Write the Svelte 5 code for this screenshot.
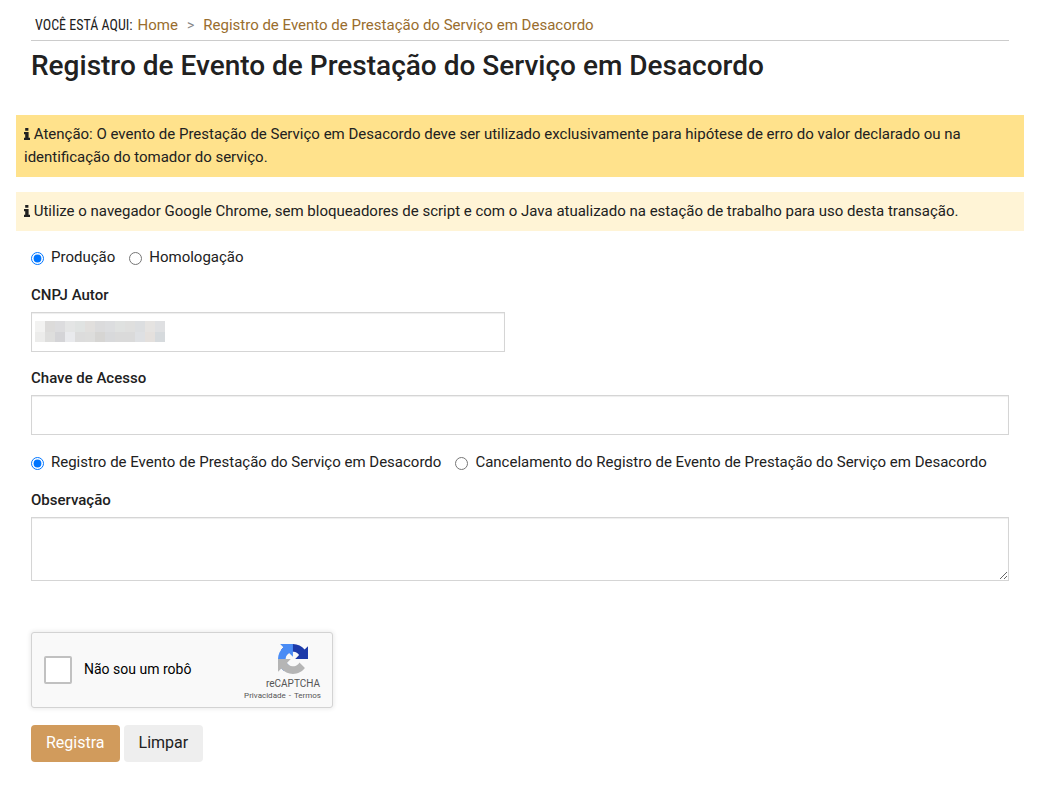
<script>
  let ambiente = $state('producao');
  let tipo = $state('registro');
  let cnpj = $state('');
  let chave = $state('');
  let observacao = $state('');
  let humano = $state(false);

  const mosaic = [
    ['#f2f2f1', '#dcdbda', '#dcdcde', '#e4e5e5', '#e0e3e2', '#e1dfdd', '#dbdbdc', '#dcdddf', '#dfe1e0', '#dfdfde', '#dcdee0', '#e5e3e1', '#dfe0e2'],
    ['#ececeb', '#dededd', '#d4d4d7', '#e9eaed', '#dcdcdc', '#dddddc', '#d6d5d3', '#d8d9db', '#dadada', '#dadada', '#dee0e3', '#e4e0dd', '#d6dadd'],
  ];

  function limpar() {
    cnpj = '';
    chave = '';
    observacao = '';
    humano = false;
  }
</script>

{#snippet info()}
  <svg class="info" viewBox="0 0 6 12" aria-hidden="true">
    <path d="M1.2 0h3.2v2.8H1.2zM0 4h4.6v5.8H6V12H0V9.800h1.200V6.200H0z" fill="currentColor" />
  </svg>
{/snippet}

<main>
  <header>
    <nav aria-label="Trilha">
      <span class="here">VOCÊ ESTÁ AQUI:</span>
      <a href="#home">Home</a>
      <span class="sep">&gt;</span>
      <a href="#registro">Registro de Evento de Prestação do Serviço em Desacordo</a>
    </nav>
    <h1>Registro de Evento de Prestação do Serviço em Desacordo</h1>
  </header>

  <p class="notice strong">{@render info()} Atenção: O evento de Prestação de Serviço em Desacordo deve ser utilizado exclusivamente para hipótese de erro do valor declarado ou na identificação do tomador do serviço.</p>
  <p class="notice">{@render info()} Utilize o navegador Google Chrome, sem bloqueadores de script e com o Java atualizado na estação de trabalho para uso desta transação.</p>

  <form onsubmit={(e) => e.preventDefault()}>
    <div class="options">
      <label><input type="radio" name="ambiente" value="producao" bind:group={ambiente} />Produção</label>
      <label><input type="radio" name="ambiente" value="homologacao" bind:group={ambiente} />Homologação</label>
    </div>

    <label class="title" for="cnpj">CNPJ Autor</label>
    <div class="half">
      <input class="text" id="cnpj" type="text" bind:value={cnpj} />
      <svg class="mask" viewBox="0 0 130 21" shape-rendering="crispEdges" aria-hidden="true">
        {#each mosaic as row, r}
          {#each row as color, c}
            <rect x={c * 10} y={r * 11} width="10" height={11 - r} fill={color} />
          {/each}
        {/each}
      </svg>
    </div>

    <label class="title" for="chave">Chave de Acesso</label>
    <input class="text" id="chave" type="text" bind:value={chave} />

    <div class="options">
      <label><input type="radio" name="tipo" value="registro" bind:group={tipo} />Registro de Evento de Prestação do Serviço em Desacordo</label>
      <label><input type="radio" name="tipo" value="cancelamento" bind:group={tipo} />Cancelamento do Registro de Evento de Prestação do Serviço em Desacordo</label>
    </div>

    <label class="title" for="observacao">Observação</label>
    <textarea class="text" id="observacao" bind:value={observacao}></textarea>

    <div class="captcha">
      <label><input type="checkbox" bind:checked={humano} />Não sou um robô</label>
      <div class="brand">
        <svg class="logo" viewBox="0 0 64 64" aria-hidden="true">
          <path fill="#1c3aa9" d="M64 31.955l-.033-1.37V4.687l-7.16 7.16C50.948 4.674 42.033.093 32.05.093c-10.4 0-19.622 4.96-25.458 12.64l11.736 11.86a15.55 15.55 0 0 1 4.754-5.334c2.05-1.6 4.952-2.906 8.968-2.906.485 0 .86.057 1.135.163 4.976.393 9.288 3.14 11.828 7.124l-8.307 8.307L64 31.953" />
          <path fill="#4a8cf5" d="M31.862.094l-1.37.033H4.594l7.16 7.16C4.58 13.147 0 22.06 0 32.046c0 10.4 4.96 19.622 12.64 25.458L24.5 45.768a15.55 15.55 0 0 1-5.334-4.754c-1.6-2.05-2.906-4.952-2.906-8.968 0-.485.057-.86.163-1.135.393-4.976 3.14-9.288 7.124-11.828l8.307 8.307L31.86.095" />
          <path fill="#b5b5b5" d="M.001 32.045l.033 1.37v25.898l7.16-7.16c5.86 7.173 14.774 11.754 24.76 11.754 10.4 0 19.622-4.96 25.458-12.64l-11.736-11.86a15.55 15.55 0 0 1-4.754 5.334c-2.05 1.6-4.952 2.906-8.968 2.906-.485 0-.86-.057-1.135-.163-4.976-.393-9.288-3.14-11.828-7.124l8.307-8.307c-10.522.04-22.4.066-27.295-.005" />
        </svg>
        <span class="name">reCAPTCHA</span>
        <span class="links"><a href="#privacidade">Privacidade</a><span>-</span><a href="#termos">Termos</a></span>
      </div>
    </div>

    <div class="buttons">
      <button class="primary" type="submit">Registra</button>
      <button type="button" onclick={limpar}>Limpar</button>
    </div>
  </form>
</main>

<style>
  :global(body) {
    margin: 0;
    background: #fff;
  }
  main {
    box-sizing: border-box;
    padding: 12px 40px 32px 16px;
    font: 15px/23px Roboto, sans-serif;
    color: #212121;
  }
  header {
    padding: 0 15px;
  }
  nav {
    display: flex;
    align-items: baseline;
    padding: 2px 4px 3px;
    border-bottom: 1px solid #ccc;
  }
  nav a {
    color: #996d2e;
    text-decoration: none;
  }
  .here {
    margin-right: 5px;
    font-family: "Roboto Condensed", Roboto, sans-serif;
    font-size: 14px;
  }
  .sep {
    margin: 0 9px;
    font-size: 14px;
    color: #888;
  }
  h1 {
    margin: 8px 0 32px;
    font-size: 28px;
    font-weight: 500;
    line-height: 34px;
  }
  .notice {
    margin: 0 0 15px;
    padding: 8px;
    background: #fff4d6;
  }
  .strong {
    background: #ffe28c;
  }
  .info {
    width: 6px;
    height: 12px;
    vertical-align: -1px;
  }
  form {
    padding: 0 15px;
  }
  .options {
    display: flex;
    flex-wrap: wrap;
    column-gap: 14px;
  }
  .options label {
    display: flex;
    align-items: center;
  }
  .options input {
    width: 13px;
    height: 13px;
    margin: 2px 7px 0 0;
  }
  .title {
    display: block;
    margin: 15px 0 5px;
    font-weight: 500;
  }
  .half {
    position: relative;
    width: 50%;
    box-sizing: border-box;
    padding-right: 15px;
  }
  .mask {
    position: absolute;
    left: 4px;
    top: 9px;
    width: 130px;
    height: 21px;
    pointer-events: none;
  }
  .text {
    display: block;
    box-sizing: border-box;
    width: 100%;
    height: 40px;
    padding: 8px;
    border: 1px solid #d5d5d5;
    border-radius: 0;
    box-shadow: inset 0 1px 1px #eee;
    background: #fff;
    font: inherit;
    color: inherit;
  }
  textarea.text {
    height: 64px;
    resize: vertical;
  }
  .text + .options {
    margin-top: 16px;
  }
  .captcha {
    display: flex;
    justify-content: space-between;
    box-sizing: border-box;
    width: 302px;
    height: 76px;
    margin: 51px 0 17px;
    padding: 0 11px 0 12px;
    border: 1px solid #d3d3d3;
    border-radius: 3px;
    box-shadow: 0 0 4px 1px rgba(0, 0, 0, 0.08);
    background: #f9f9f9;
  }
  .captcha label {
    display: flex;
    align-items: center;
    gap: 12px;
    padding-bottom: 1px;
    font-size: 14px;
    color: #000;
  }
  .captcha input {
    appearance: none;
    box-sizing: border-box;
    width: 28px;
    height: 28px;
    margin: 0;
    border: 2px solid #c1c1c1;
    border-radius: 2px;
    background: #fff;
  }
  .captcha input:checked {
    background: #4285f4;
  }
  .brand {
    display: flex;
    flex-direction: column;
    align-items: flex-end;
    padding-top: 11px;
    color: #555;
  }
  .logo {
    width: 30px;
    height: 30px;
    margin-right: 13px;
  }
  .name {
    margin-top: 4px;
    margin-right: 1px;
    font-size: 10px;
    line-height: 12px;
  }
  .links {
    display: flex;
    gap: 3px;
    font-size: 8px;
    line-height: 12px;
  }
  .links a {
    color: inherit;
    text-decoration: none;
  }
  .buttons {
    display: flex;
    gap: 4px;
  }
  button {
    padding: 6px 15px 8px;
    border: 0;
    border-radius: 4px;
    background: #eee;
    font: 16px/23px Roboto, sans-serif;
    color: #212121;
    cursor: pointer;
  }
  .primary {
    background: #d19b5c;
    color: #fff;
  }
</style>
